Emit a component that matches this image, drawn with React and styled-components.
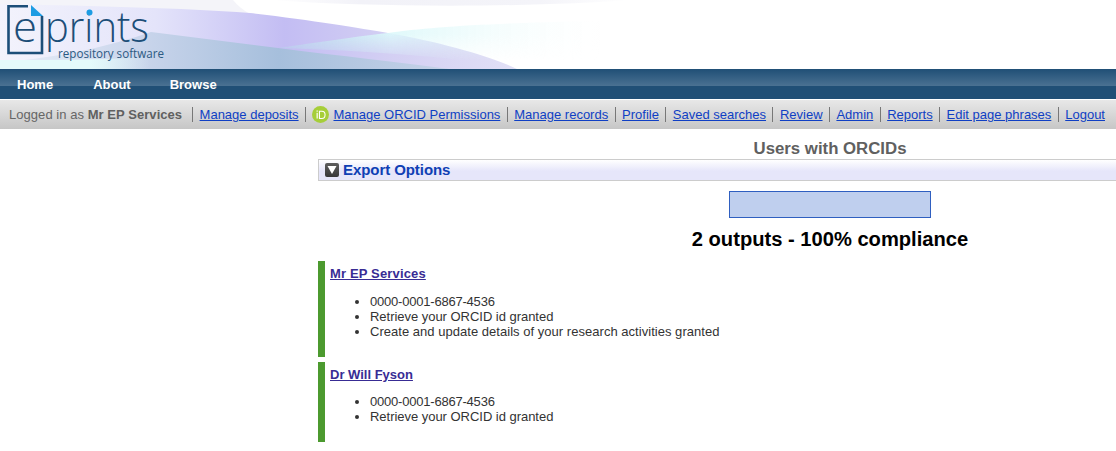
import React from "react";
import styled, { createGlobalStyle } from "styled-components";

const GlobalStyle = createGlobalStyle`
  html, body {
    margin: 0;
    padding: 0;
    background: #fff;
    overflow: hidden;
  }
  body {
    font-family: "Liberation Sans", Arial, sans-serif;
    font-size: 13px;
    color: #333;
  }
`;

const Page = styled.div`
  width: 1116px;
  overflow: hidden;
`;

const Banner = styled.header`
  height: 69px;
  display: flex;
  background: #fff;
`;

const Nav = styled.nav`
  height: 30px;
  display: flex;
  align-items: center;
  padding-left: 17px;
  gap: 40px;
  background: linear-gradient(#204f76 0, #4a7192 17px, #204f76 17px);
`;

const NavLink = styled.a`
  color: #fff;
  font-weight: bold;
  font-size: 13px;
  margin-right: ${(p) => p.$trim || 0}px;
`;

const UserBar = styled.div`
  margin-top: 1px;
  height: 29px;
  display: flex;
  align-items: center;
  white-space: nowrap;
  padding-left: 9px;
  background: linear-gradient(#e8e8e8, #c6c6c6);
`;

const LoggedIn = styled.span`
  color: #666;
  padding-right: 10px;
  letter-spacing: 0.050px;
  b {
    color: #606060;
  }
`;

const BarItem = styled.span`
  display: flex;
  align-items: center;
  height: 15px;
  padding: 0 6.450px;
  border-left: 1px solid #777;
`;

const BarLink = styled.a`
  color: #0f3fc4;
  text-decoration: underline;
`;

const OrcidBadge = styled.svg`
  width: 17px;
  height: 17px;
  margin: 0 4px 0 0;
`;

const Main = styled.main`
  margin-left: 318px;
  width: 1024px;
`;

const Title = styled.h1`
  margin: 0;
  padding-top: 10px;
  height: 20px;
  font-size: 16.800px;
  line-height: 20px;
  font-weight: bold;
  text-align: center;
  color: #606060;
`;

const ExportBox = styled.div`
  box-sizing: border-box;
  height: 22px;
  display: flex;
  align-items: center;
  gap: 4px;
  padding-left: 6px;
  border: 1px solid #ccc;
  border-width: 1px 0 1px 1px;
  background: linear-gradient(#fff 0, #e6e6fa 11px);
`;

const ExportIcon = styled.svg`
  width: 14px;
  height: 14px;
`;

const ExportLabel = styled.a`
  color: #0f3fb4;
  font-size: 15px;
  font-weight: bold;
  letter-spacing: -0.070px;
  padding-bottom: 2px;
`;

const Compliance = styled.div`
  display: flex;
  flex-direction: column;
  align-items: center;
  padding-top: 10px;
`;

const ComplianceBar = styled.div`
  box-sizing: border-box;
  width: 202px;
  height: 27px;
  background: #bfcfee;
  border: 1px solid #2f5fc0;
`;

const ComplianceText = styled.h2`
  margin: 10px 0 10px;
  font-size: 20.150px;
  line-height: 23px;
  color: #000;
`;

const UserCard = styled.section`
  box-sizing: border-box;
  height: ${(p) => p.$height}px;
  margin-bottom: 5px;
  padding: 5px 0 0 5px;
  border-left: 7px solid #4c9a2f;
`;

const UserName = styled.a`
  color: #382c94;
  font-weight: bold;
  text-decoration: underline;
  letter-spacing: ${(p) => p.$track || 0}px;
`;

const Details = styled.ul`
  margin: ${(p) => p.$gap}px 0 0;
  padding-left: 40px;
  line-height: 15px;
  color: #333;
`;

const Detail = styled.li`
  letter-spacing: ${(p) => p.$track || 0}px;
`;

const links = [
  "Manage records",
  "Profile",
  "Saved searches",
  "Review",
  "Admin",
  "Reports",
  "Edit page phrases",
  "Logout",
];

function BannerArt() {
  return (
    <svg width="1116" height="69" viewBox="0 0 1116 69">
      <defs>
        <linearGradient id="wash" gradientUnits="userSpaceOnUse" x1="0" x2="517" y1="0" y2="0">
          <stop offset="0" stopColor="#f3f3fc" />
          <stop offset="0.3" stopColor="#e4e4fa" />
          <stop offset="0.55" stopColor="#c3bdf3" />
          <stop offset="0.75" stopColor="#d3cff3" />
          <stop offset="1" stopColor="#e2e0f6" />
        </linearGradient>
        <linearGradient id="low" gradientUnits="userSpaceOnUse" x1="0" x2="449" y1="0" y2="0">
          <stop offset="0" stopColor="#e8eef8" />
          <stop offset="0.3" stopColor="#cbd6ec" />
          <stop offset="0.62" stopColor="#a6bfdc" />
          <stop offset="1" stopColor="#c6d2e8" />
        </linearGradient>
        <linearGradient id="glow" gradientUnits="userSpaceOnUse" x1="0" x2="150" y1="0" y2="0">
          <stop offset="0" stopColor="#e4fbfb" />
          <stop offset="0.6" stopColor="#e4fbfb" />
          <stop offset="1" stopColor="#e4fbfb" stopOpacity="0" />
        </linearGradient>
        <linearGradient id="cyan" gradientUnits="userSpaceOnUse" x1="278" x2="600" y1="0" y2="0">
          <stop offset="0" stopColor="#b4e0ea" stopOpacity="0.7" />
          <stop offset="0.35" stopColor="#dcf8fa" stopOpacity="0.9" />
          <stop offset="0.7" stopColor="#e8fbfb" stopOpacity="0.4" />
          <stop offset="1" stopColor="#f2fdfd" stopOpacity="0" />
        </linearGradient>
        <linearGradient id="cyanFade" gradientUnits="userSpaceOnUse" x1="0" x2="0" y1="22" y2="62">
          <stop offset="0.3" stopColor="#fff" />
          <stop offset="1" stopColor="#000" />
        </linearGradient>
        <mask id="cyanMask">
          <rect width="1116" height="69" fill="url(#cyanFade)" />
        </mask>
        <linearGradient id="faint" gradientUnits="userSpaceOnUse" x1="270" x2="630" y1="0" y2="0">
          <stop offset="0" stopColor="#fff" />
          <stop offset="0.25" stopColor="#f2f2f8" />
          <stop offset="0.75" stopColor="#f4f4f9" />
          <stop offset="1" stopColor="#fff" />
        </linearGradient>
      </defs>
      <path d="M270 0H630C540 7 380 8 270 0Z" fill="url(#faint)" />
      <path d="M0 0H233C238 6 243 10 250 14H0Z" fill="#f4f4f9" />
      <path d="M0 4C100 6 180 8 250 13C310 20 360 28 388 33C440 42 490 56 517 69H0Z" fill="url(#wash)" />
      <path d="M151 32L278 48C340 56 400 62 449 69H0V62C60 58 110 46 151 32Z" fill="url(#low)" />
      <path d="M0 60C50 60 100 60 150 57V69H0Z" fill="url(#glow)" />
      <path d="M278 48C320 42 360 36 388 33C430 27 490 23 600 21V60H460C400 53 340 50 278 48Z" fill="url(#cyan)" mask="url(#cyanMask)" />
      <path d="M28 6.300H8.500V53H42V16" fill="none" stroke="#1c4e78" strokeWidth="2.600" />
      <path d="M31 5L43 16H31Z" fill="#1d9ce3" />
      <text x="13" y="41.500" fontFamily="'Open Sans', sans-serif" fontWeight="300" fontSize="43" fill="#1c4e78" textLength="24" lengthAdjust="spacingAndGlyphs">e</text>
      <text x="45" y="41.500" fontFamily="'Open Sans', sans-serif" fontWeight="300" fontSize="43" fill="#1c4e78" textLength="104" lengthAdjust="spacingAndGlyphs">prints</text>
      <circle cx="89.500" cy="12.500" r="3" fill="#1d9ce3" />
      <text x="58" y="57.500" fontFamily="'Open Sans', sans-serif" fontSize="13" fill="#2c5a82" textLength="106" lengthAdjust="spacingAndGlyphs">repository software</text>
    </svg>
  );
}

export default function App() {
  return (
    <Page>
      <GlobalStyle />
      <Banner>
        <BannerArt />
      </Banner>
      <Nav>
        <NavLink>Home</NavLink>
        <NavLink $trim={-1}>About</NavLink>
        <NavLink>Browse</NavLink>
      </Nav>
      <UserBar>
        <LoggedIn>
          Logged in as <b>Mr EP Services</b>
        </LoggedIn>
        <BarItem>
          <BarLink>Manage deposits</BarLink>
        </BarItem>
        <BarItem>
          <OrcidBadge viewBox="0 0 16 16">
            <circle cx="8" cy="8" r="8" fill="#a6ce39" />
            <rect x="4.300" y="6.400" width="1.100" height="5.400" fill="#fff" />
            <rect x="4.300" y="4.200" width="1.100" height="1.200" fill="#fff" />
            <path d="M7 4.900H9.300C11.300 4.900 12.300 6.300 12.300 8.300C12.300 10.300 11.200 11.800 9.300 11.800H7Z" fill="none" stroke="#fff" strokeWidth="1" />
          </OrcidBadge>
          <BarLink>Manage ORCID Permissions</BarLink>
        </BarItem>
        {links.map((l) => (
          <BarItem key={l}>
            <BarLink>{l}</BarLink>
          </BarItem>
        ))}
      </UserBar>
      <Main>
        <Title>Users with ORCIDs</Title>
        <ExportBox>
          <ExportIcon viewBox="0 0 14 14">
            <defs>
              <linearGradient id="exportFill" x1="0" x2="0" y1="0" y2="1">
                <stop offset="0" stopColor="#5e5e5e" />
                <stop offset="1" stopColor="#383838" />
              </linearGradient>
            </defs>
            <rect width="14" height="14" rx="2" fill="url(#exportFill)" />
            <path d="M2.500 3H11.500L7 11Z" fill="#fff" />
          </ExportIcon>
          <ExportLabel>Export Options</ExportLabel>
        </ExportBox>
        <Compliance>
          <ComplianceBar />
          <ComplianceText>2 outputs - 100% compliance</ComplianceText>
        </Compliance>
        <UserCard $height={96}>
          <UserName $track={0.15}>Mr EP Services</UserName>
          <Details $gap={13}>
            <Detail $track={-0.21}>0000-0001-6867-4536</Detail>
            <Detail $track={-0.03}>Retrieve your ORCID id granted</Detail>
            <Detail $track={0.03}>Create and update details of your research activities granted</Detail>
          </Details>
        </UserCard>
        <UserCard $height={80}>
          <UserName>Dr Will Fyson</UserName>
          <Details $gap={12}>
            <Detail $track={-0.21}>0000-0001-6867-4536</Detail>
            <Detail $track={-0.03}>Retrieve your ORCID id granted</Detail>
          </Details>
        </UserCard>
      </Main>
    </Page>
  );
}
